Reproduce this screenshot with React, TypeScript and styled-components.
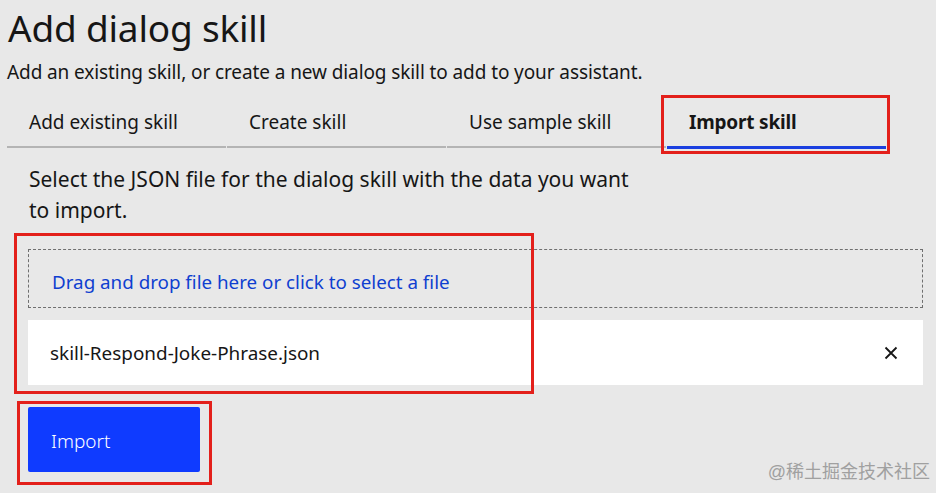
import styled, { createGlobalStyle } from 'styled-components';

const GlobalStyle = createGlobalStyle`
  html, body {
    margin: 0;
    padding: 0;
    background: #e8e8e8;
  }
  * {
    box-sizing: border-box;
  }
`;

const tabs = ['Add existing skill', 'Create skill', 'Use sample skill', 'Import skill'];

const CloseIcon = () => (
  <svg width="14" height="14" viewBox="0 0 14 14">
    <path d="M1.5 1.5 L12.5 12.5 M12.5 1.5 L1.5 12.5" stroke="#161616" strokeWidth="1.8" />
  </svg>
);

const App = () => {
  return (
    <Page>
      <GlobalStyle />
      <Title>Add dialog skill</Title>
      <Subtitle>Add an existing skill, or create a new dialog skill to add to your assistant.</Subtitle>

      <TabList>
        {tabs.map((t, i) => (
          <Tab key={t} $active={i === 3}>
            {t}
            {i === 3 && <Mark $inset="-5px -4px -8px -6px" />}
          </Tab>
        ))}
      </TabList>

      <Panel>
        <Intro>
          Select the JSON file for the dialog skill with the data you want to import.
        </Intro>

        <Files>
          <Mark $inset="-16px auto -9px -14px" $width="520px" />
          <DropZone>Drag and drop file here or click to select a file</DropZone>
          <FileItem>
            <span>skill-Respond-Joke-Phrase.json</span>
            <CloseButton aria-label="Remove file">
              <CloseIcon />
            </CloseButton>
          </FileItem>
        </Files>

        <ButtonWrap>
          <Mark $inset="-6px -12px -13px -11px" />
          <ImportButton>Import</ImportButton>
        </ButtonWrap>
      </Panel>

      <Watermark>@稀土掘金技术社区</Watermark>
    </Page>
  );
};

export default App;

const Page = styled.div`
  position: relative;
  width: 936px;
  height: 493px;
  overflow: hidden;
  padding: 6px 8px 0 7px;
  background: #e8e8e8;
  color: #161616;
  font-family: 'Noto Sans', 'Open Sans', sans-serif;
`;

const Title = styled.h1`
  margin: 0 0 0 1px;
  font-size: 37px;
  line-height: 44px;
  font-weight: 400;
  letter-spacing: -0.2px;
`;

const Subtitle = styled.p`
  margin: 10px 0 0;
  font-size: 19px;
  line-height: 24px;
  letter-spacing: -0.1px;
`;

const TabList = styled.div`
  display: flex;
  gap: 1px;
  margin-top: 16px;
`;

const Tab = styled.div<{ $active?: boolean }>`
  position: relative;
  width: 219px;
  padding: 10px 0 12px 22px;
  font-size: 19px;
  line-height: 24px;
  font-weight: ${(p) => (p.$active ? 700 : 400)};
  letter-spacing: ${(p) => (p.$active ? '-0.2px' : '0')};
  border-bottom: ${(p) => (p.$active ? '3px solid #1a3fe0' : '2px solid #b4b4b4')};
  margin-bottom: ${(p) => (p.$active ? '-1px' : '0')};
`;

const Mark = styled.div<{ $inset: string; $width?: string }>`
  position: absolute;
  inset: ${(p) => p.$inset};
  width: ${(p) => p.$width || 'auto'};
  border: 3px solid #e3201b;
  pointer-events: none;
  z-index: 2;
`;

const Panel = styled.div`
  padding: 16px 5px 0 21px;
`;

const Intro = styled.p`
  margin: 0 0 0 1px;
  max-width: 620px;
  font-size: 21px;
  line-height: 31px;
`;

const Files = styled.div`
  position: relative;
  display: flex;
  flex-direction: column;
  gap: 12px;
  margin-top: 23px;
`;

const DropZone = styled.div`
  height: 59px;
  display: flex;
  align-items: center;
  padding: 6px 0 0 23px;
  border: 1px dashed #6f6f6f;
  color: #0f3fd0;
  font-size: 18.8px;
`;

const FileItem = styled.div`
  height: 65px;
  display: flex;
  align-items: center;
  justify-content: space-between;
  padding: 0 25px 0 22px;
  background: #fff;
  font-size: 18.9px;
`;

const CloseButton = styled.button`
  display: flex;
  border: none;
  background: none;
  padding: 0;
`;

const ButtonWrap = styled.div`
  position: relative;
  display: inline-flex;
  margin-top: 22px;
`;

const ImportButton = styled.button`
  width: 172px;
  height: 65px;
  border: none;
  border-radius: 2px;
  background: #0f3bff;
  color: #fff;
  text-align: left;
  padding: 2px 0 0 23px;
  font-family: 'Noto Sans', sans-serif;
  font-size: 19px;
  font-weight: 300;
`;

const Watermark = styled.div`
  position: absolute;
  right: 6px;
  bottom: 10px;
  color: #a0a0a0;
  font-size: 18px;
  font-family: 'Liberation Sans', 'Noto Sans CJK SC', sans-serif;
`;
